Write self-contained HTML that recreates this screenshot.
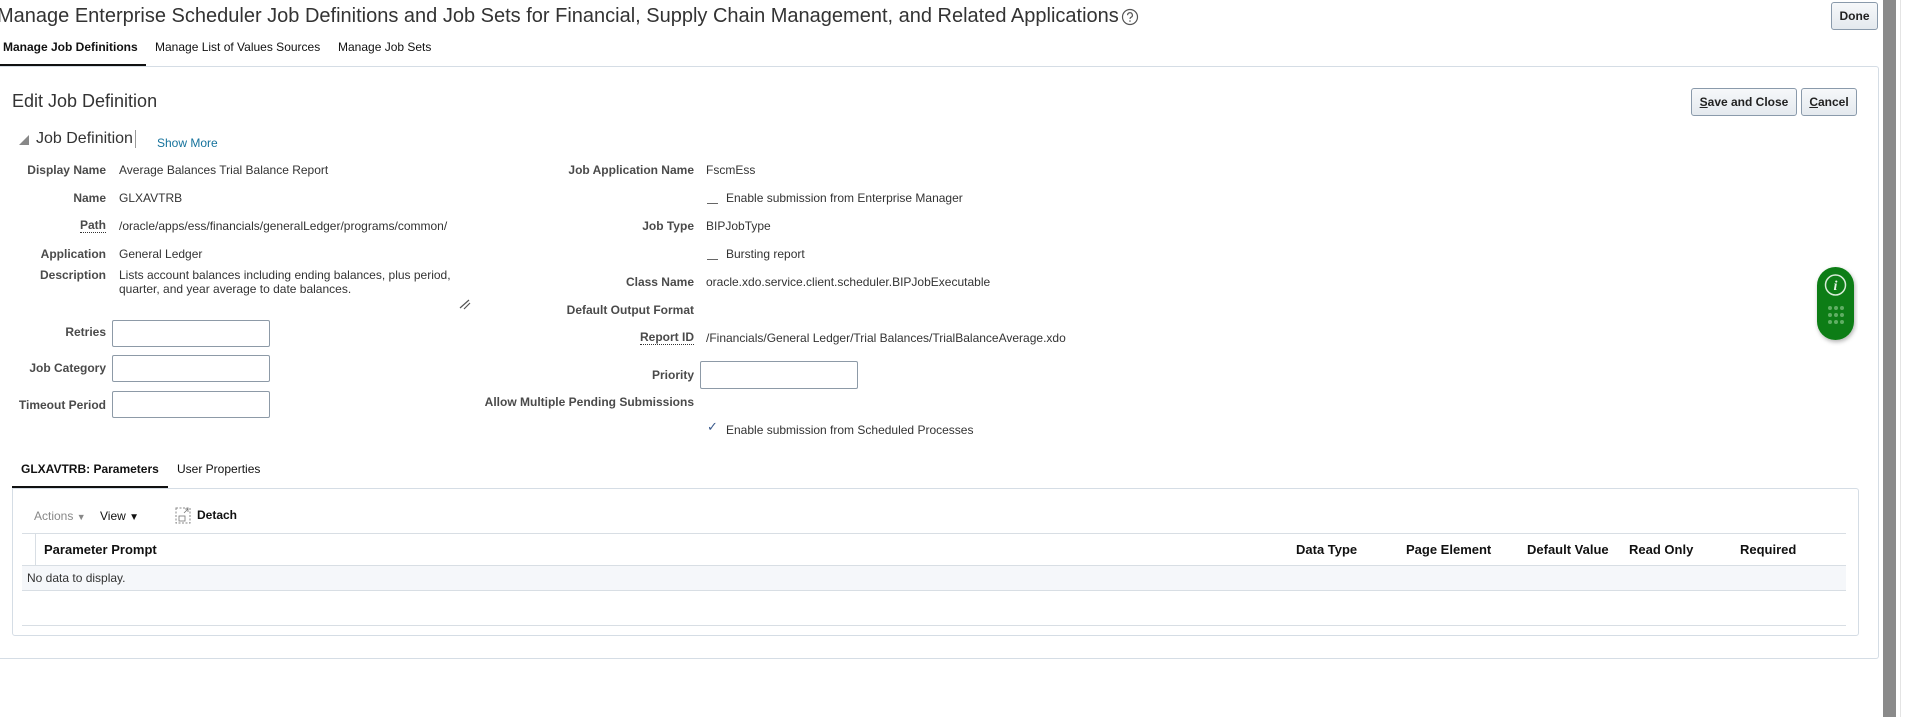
<!DOCTYPE html>
<html><head><meta charset="utf-8"><style>
*{margin:0;padding:0;box-sizing:border-box}
body{width:1906px;height:717px;background:#fff;font-family:"Liberation Sans",Arial,sans-serif;color:#333;position:relative;overflow:hidden}
.a{position:absolute;white-space:nowrap}
.lb{font-weight:bold;font-size:12px;color:#4a4a4a;text-align:right}
.v{font-size:12px;color:#333}
.inp{position:absolute;border:1px solid #8d9aa7;border-radius:2px;background:#fff}
.btn{position:absolute;border:1px solid #8a9aab;border-radius:3px;background:linear-gradient(#f6f8fa,#e4e9ee);font-weight:bold;font-size:12px;color:#222;text-align:center}
.th{font-weight:bold;font-size:13px;color:#111}
.dash{position:absolute;width:11px;border-top:1px solid #666}
</style></head><body>
<div class="a" style="left:-3px;top:5px;font-size:20px;color:#333">Manage Enterprise Scheduler Job Definitions and Job Sets for Financial, Supply Chain Management, and Related Applications</div>
<svg class="a" style="left:1121px;top:8px" width="18" height="18" viewBox="0 0 18 18"><circle cx="9" cy="9" r="7.5" fill="none" stroke="#555" stroke-width="1.2"/><path d="M6.6 7.2a2.4 2.4 0 1 1 3.4 2.1c-.7.4-1 .8-1 1.6" fill="none" stroke="#555" stroke-width="1.2"/><circle cx="9" cy="13" r=".8" fill="#555"/></svg>
<div class="btn" style="left:1831px;top:2px;width:47px;height:28px;line-height:26px">Done</div>
<div class="a" style="left:3px;top:40px;font-size:12px;font-weight:bold;color:#111">Manage Job Definitions</div>
<div class="a" style="left:155px;top:40px;font-size:12px;color:#111">Manage List of Values Sources</div>
<div class="a" style="left:338px;top:40px;font-size:12px;color:#111">Manage Job Sets</div>
<div class="a" style="left:0;top:64px;width:146px;height:3px;background:#111"></div>
<div class="a" style="left:0;top:66px;width:1879px;height:593px;border:1px solid #d5dde5;border-left:none;border-radius:0 3px 3px 0"></div>
<div class="a" style="left:12px;top:91px;font-size:18px;color:#333">Edit Job Definition</div>
<div class="btn" style="left:1691px;top:88px;width:106px;height:28px;line-height:26px"><u>S</u>ave and Close</div>
<div class="btn" style="left:1801px;top:88px;width:56px;height:28px;line-height:26px"><u>C</u>ancel</div>
<svg class="a" style="left:18px;top:134px" width="12" height="12"><path d="M1 11L11 11L11 1Z" fill="#888"/></svg>
<div class="a" style="left:36px;top:130px;font-size:16px;color:#333">Job Definition</div>
<div class="a" style="left:135px;top:130px;width:1px;height:18px;background:#999"></div>
<div class="a" style="left:157px;top:136px;font-size:12px;color:#15729c">Show More</div>

<div class="a lb" style="right:1800px;top:163px">Display Name</div>
<div class="a v" style="left:119px;top:163px">Average Balances Trial Balance Report</div>
<div class="a lb" style="right:1800px;top:191px">Name</div>
<div class="a v" style="left:119px;top:191px">GLXAVTRB</div>
<div class="a lb" style="right:1800px;top:219px;border-bottom:1px dotted #333;line-height:13px">Path</div>
<div class="a v" style="left:119px;top:219px">/oracle/apps/ess/financials/generalLedger/programs/common/</div>
<div class="a lb" style="right:1800px;top:247px">Application</div>
<div class="a v" style="left:119px;top:247px">General Ledger</div>
<div class="a lb" style="right:1800px;top:268px">Description</div>
<div class="a v" style="left:119px;top:268px;line-height:14px">Lists account balances including ending balances, plus period,<br>quarter, and year average to date balances.</div>
<svg class="a" style="left:459px;top:298px" width="12" height="12"><path d="M1 10L10 2M5 11L11 5" stroke="#555" stroke-width="1.2"/></svg>
<div class="a lb" style="right:1800px;top:325px">Retries</div>
<div class="inp" style="left:112px;top:320px;width:158px;height:27px"></div>
<div class="a lb" style="right:1800px;top:361px">Job Category</div>
<div class="inp" style="left:112px;top:355px;width:158px;height:27px"></div>
<div class="a lb" style="right:1800px;top:398px">Timeout Period</div>
<div class="inp" style="left:112px;top:391px;width:158px;height:27px"></div>

<div class="a lb" style="right:1212px;top:163px">Job Application Name</div>
<div class="a v" style="left:706px;top:163px">FscmEss</div>
<div class="dash" style="left:707px;top:203px"></div>
<div class="a v" style="left:726px;top:191px">Enable submission from Enterprise Manager</div>
<div class="a lb" style="right:1212px;top:219px">Job Type</div>
<div class="a v" style="left:706px;top:219px">BIPJobType</div>
<div class="dash" style="left:707px;top:259px"></div>
<div class="a v" style="left:726px;top:247px">Bursting report</div>
<div class="a lb" style="right:1212px;top:275px">Class Name</div>
<div class="a v" style="left:706px;top:275px">oracle.xdo.service.client.scheduler.BIPJobExecutable</div>
<div class="a lb" style="right:1212px;top:303px">Default Output Format</div>
<div class="a lb" style="right:1212px;top:331px;border-bottom:1px dotted #333;line-height:13px">Report ID</div>
<div class="a v" style="left:706px;top:331px">/Financials/General Ledger/Trial Balances/TrialBalanceAverage.xdo</div>
<div class="a lb" style="right:1212px;top:368px">Priority</div>
<div class="inp" style="left:700px;top:361px;width:158px;height:28px"></div>
<div class="a lb" style="right:1212px;top:395px">Allow Multiple Pending Submissions</div>
<div class="a" style="left:707px;top:419px;font-size:13px;color:#3a5a8c">✓</div>
<div class="a v" style="left:726px;top:423px">Enable submission from Scheduled Processes</div>

<svg class="a" style="left:1812px;top:264px" width="46" height="82"><defs><filter id="s"><feDropShadow dx="1" dy="2" stdDeviation="2" flood-opacity=".3"/></filter></defs><rect x="5" y="3" width="37" height="73" rx="18.5" fill="#0a7d12" filter="url(#s)"/><circle cx="23.5" cy="21" r="10" fill="none" stroke="#d8ecd8" stroke-width="1.5"/><text x="23.5" y="26" font-family="Liberation Serif,serif" font-style="italic" font-weight="bold" font-size="14" fill="#e8f4e8" text-anchor="middle">i</text><g fill="#5fae63"><circle cx="18" cy="44" r="2"/><circle cx="24" cy="44" r="2"/><circle cx="30" cy="44" r="2"/><circle cx="18" cy="51" r="2"/><circle cx="24" cy="51" r="2"/><circle cx="30" cy="51" r="2"/><circle cx="18" cy="58" r="2"/><circle cx="24" cy="58" r="2"/><circle cx="30" cy="58" r="2"/></g></svg>

<div class="a" style="left:21px;top:462px;font-size:12px;font-weight:bold;color:#111">GLXAVTRB: Parameters</div>
<div class="a" style="left:177px;top:462px;font-size:12px;color:#111">User Properties</div>
<div class="a" style="left:12px;top:486px;width:156px;height:3px;background:#111"></div>
<div class="a" style="left:12px;top:488px;width:1847px;height:148px;border:1px solid #d5dde5;border-radius:0 3px 3px 3px"></div>
<div class="a" style="left:34px;top:509px;font-size:12px;color:#888">Actions <span style="font-size:9px">▼</span></div>
<div class="a" style="left:100px;top:509px;font-size:12px;color:#111">View <span style="font-size:10px">▼</span></div>
<svg class="a" style="left:175px;top:507px" width="16" height="17"><rect x="1" y="1" width="14" height="15" fill="none" stroke="#888" stroke-dasharray="2 1.5"/><rect x="4" y="9" width="6" height="5" fill="none" stroke="#777" stroke-width=".8"/><path d="M9 6L13 2M10 2H13V5" stroke="#777" stroke-width=".8" fill="none"/></svg>
<div class="a" style="left:197px;top:508px;font-size:12px;font-weight:bold;color:#111">Detach</div>
<div class="a" style="left:22px;top:533px;width:1824px;height:1px;background:#d8dee4"></div>
<div class="a" style="left:35px;top:534px;width:1px;height:31px;background:#d8dee4"></div>
<div class="a th" style="left:44px;top:542px">Parameter Prompt</div>
<div class="a th" style="left:1296px;top:542px">Data Type</div>
<div class="a th" style="left:1406px;top:542px">Page Element</div>
<div class="a th" style="left:1527px;top:542px">Default Value</div>
<div class="a th" style="left:1629px;top:542px">Read Only</div>
<div class="a th" style="left:1740px;top:542px">Required</div>
<div class="a" style="left:22px;top:565px;width:1824px;height:26px;background:#f5f7fa;border-top:1px solid #d8dee4;border-bottom:1px solid #d8dee4"></div>
<div class="a v" style="left:27px;top:571px">No data to display.</div>
<div class="a" style="left:22px;top:625px;width:1824px;height:1px;background:#d8dee4"></div>

<div class="a" style="left:1883px;top:0;width:13px;height:717px;background:#8a8a8a"></div>
<div class="a" style="left:1900px;top:0;width:1px;height:717px;background:#e4e4e4"></div>
</body></html>
